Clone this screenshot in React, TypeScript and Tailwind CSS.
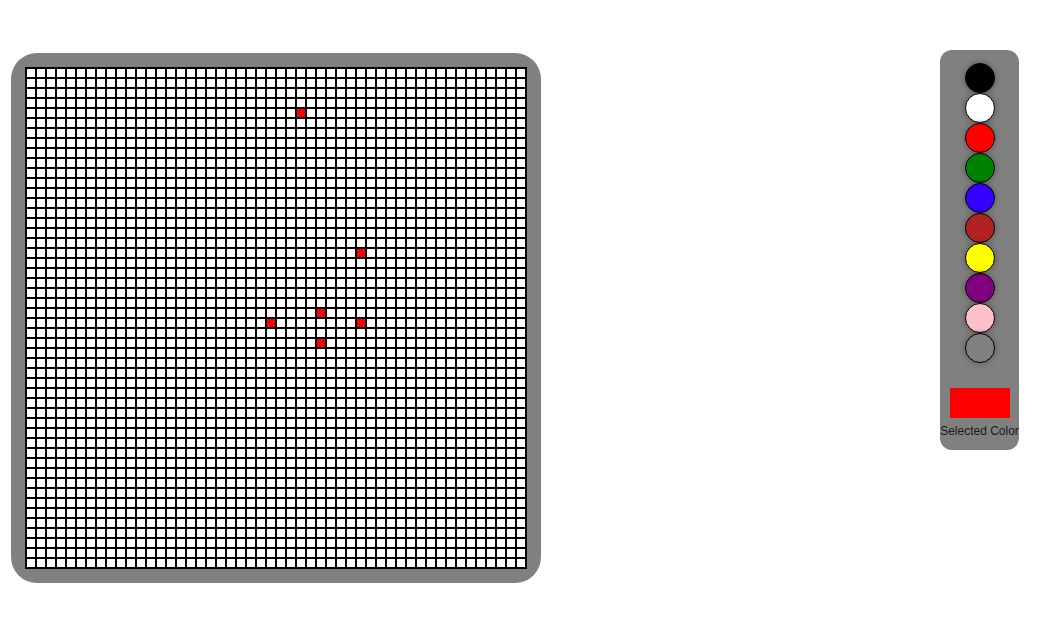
import { useState } from 'react';

const SIZE = 50;

const COLORS = [
  '#000000',
  '#ffffff',
  '#ff0000',
  '#008000',
  '#3300ff',
  '#b22222',
  '#ffff00',
  '#800080',
  '#ffc0cb',
  '#808080',
];

// painted cells, "row-col"
const INITIAL: Record<string, string> = {
  '4-27': '#ff0000',
  '18-33': '#ff0000',
  '24-29': '#ff0000',
  '25-24': '#ff0000',
  '25-33': '#ff0000',
  '27-29': '#ff0000',
};

export default function App() {
  const [selected, setSelected] = useState('#ff0000');
  const [cells, setCells] = useState<Record<string, string>>(INITIAL);

  const paint = (key: string) => setCells((c) => ({ ...c, [key]: selected }));

  return (
    <div
      className="flex items-start pt-[50px] pl-[11px] pr-[41px] bg-white min-h-[631px]"
      style={{ fontFamily: '"Liberation Sans", Arial, sans-serif' }}
    >
      {/* Canvas */}
      <div className="mt-[3px] p-[14px] bg-[#808080] rounded-[26px]">
        <div className="grid grid-cols-[repeat(50,10px)] border border-black bg-white">
          {Array.from({ length: SIZE * SIZE }, (_, i) => {
            const key = `${Math.floor(i / SIZE)}-${i % SIZE}`;
            return (
              <div
                key={key}
                onClick={() => paint(key)}
                className="w-[10px] h-[10px] border border-black"
                style={{ backgroundColor: cells[key] ?? '#ffffff' }}
              />
            );
          })}
        </div>
      </div>

      {/* Palette */}
      <div className="ml-auto w-[79px] flex flex-col items-center bg-[#808080] rounded-[12px] pt-[13px] pb-[12px]">
        {COLORS.map((c) => (
          <button
            key={c}
            onClick={() => setSelected(c)}
            className="w-[30px] h-[30px] rounded-full border border-black shadow-[0_0_6px_rgba(0,0,0,0.35)]"
            style={{ backgroundColor: c }}
          />
        ))}
        <div className="mt-[25px] w-[60px] h-[30px]" style={{ backgroundColor: selected }} />
        <p className="mt-[6px] text-[12px] leading-[14px] text-[#1a1a1a] whitespace-nowrap">
          Selected Color
        </p>
      </div>
    </div>
  );
}
